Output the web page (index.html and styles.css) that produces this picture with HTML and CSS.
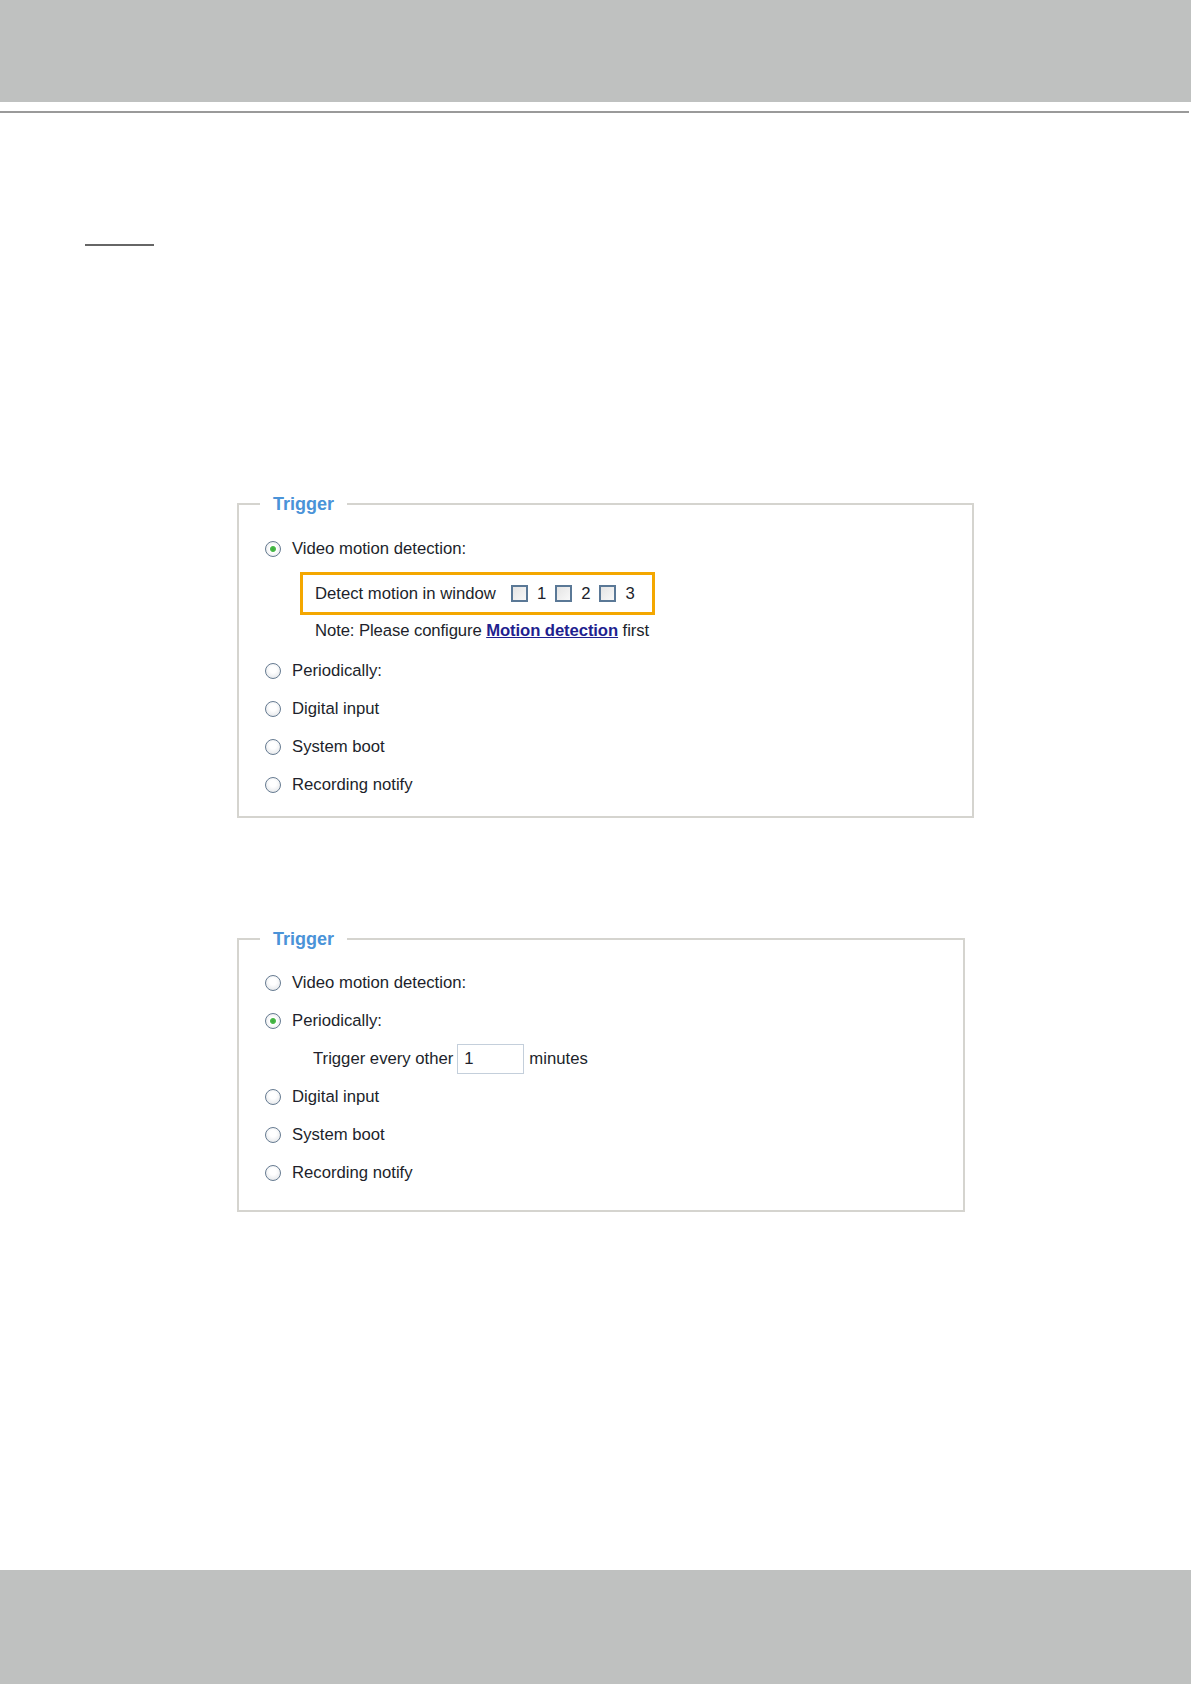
FILE: index.html
```html
<!DOCTYPE html>
<html lang="en">
<head>
    <meta charset="UTF-8">
    <meta name="viewport" content="width=device-width, initial-scale=1.0">
    <title>Event Settings - Trigger</title>
    <link rel="stylesheet" href="styles.css">
</head>
<body>
    <div class="page">
        <header class="top-band"></header>
        <div class="top-rule"></div>

        <main class="content">
            <div class="short-rule"></div>

            <!-- Trigger: video motion detection selected -->
            <fieldset class="trigger trigger-motion">
                <legend>Trigger</legend>
                <div class="row">
                    <input type="radio" name="trig1" class="radio" checked>
                    <span>Video motion detection:</span>
                </div>
                <div class="detect-box">
                    <span class="detect-label">Detect motion in window</span>
                    <input type="checkbox" class="check"><span class="num">1</span>
                    <input type="checkbox" class="check"><span class="num">2</span>
                    <input type="checkbox" class="check"><span class="num">3</span>
                </div>
                <div class="note">Note: Please configure <a href="#">Motion detection</a> first</div>
                <div class="row row-after-note">
                    <input type="radio" name="trig1" class="radio">
                    <span>Periodically:</span>
                </div>
                <div class="row">
                    <input type="radio" name="trig1" class="radio">
                    <span>Digital input</span>
                </div>
                <div class="row">
                    <input type="radio" name="trig1" class="radio">
                    <span>System boot</span>
                </div>
                <div class="row">
                    <input type="radio" name="trig1" class="radio">
                    <span>Recording notify</span>
                </div>
            </fieldset>

            <!-- Trigger: periodically selected -->
            <fieldset class="trigger trigger-period">
                <legend>Trigger</legend>
                <div class="row">
                    <input type="radio" name="trig2" class="radio">
                    <span>Video motion detection:</span>
                </div>
                <div class="row">
                    <input type="radio" name="trig2" class="radio" checked>
                    <span>Periodically:</span>
                </div>
                <div class="row sub-row">
                    <span>Trigger every other</span>
                    <input type="text" class="minutes" value="1">
                    <span>minutes</span>
                </div>
                <div class="row">
                    <input type="radio" name="trig2" class="radio">
                    <span>Digital input</span>
                </div>
                <div class="row">
                    <input type="radio" name="trig2" class="radio">
                    <span>System boot</span>
                </div>
                <div class="row">
                    <input type="radio" name="trig2" class="radio">
                    <span>Recording notify</span>
                </div>
            </fieldset>
        </main>

        <footer class="bottom-band"></footer>
    </div>
</body>
</html>
```

FILE: styles.css
```css
:root {
    --band-color: #bfc1c0;
    --text-color: #211f2b;
    --legend-color: #4a93d8;
    --frame-color: #d5d4cf;
    --highlight: #f4a700;
}

body {
    margin: 0;
    font-family: "Liberation Sans", Arial, sans-serif;
    color: var(--text-color);
    background-color: #ffffff;
}

.page {
    min-height: 1684px;
    display: flex;
    flex-direction: column;
}

.top-band {
    height: 102px;
    background-color: var(--band-color);
}

.top-rule {
    width: 1189px;
    height: 2px;
    margin-top: 9px;
    background-color: #9a9a9a;
}

.content {
    flex: 1;
    padding-left: 237px;
}

.short-rule {
    width: 69px;
    height: 2px;
    margin: 131px 0 0 -152px;
    background-color: #666666;
}

.trigger {
    margin: 0;
    padding: 0 0 12px 26px;
    border: 2px solid var(--frame-color);
    font-size: 16.7px;
}

.trigger-motion {
    width: 707px;
    margin-top: 248px;
    padding-top: 16px;
}

.trigger-period {
    width: 698px;
    margin-top: 111px;
    padding-top: 15px;
    padding-bottom: 18px;
}

legend {
    margin-left: -5px;
    padding: 0 13px;
    font-size: 18px;
    font-weight: bold;
    line-height: 20px;
    color: var(--legend-color);
}

.row {
    height: 38px;
    display: flex;
    align-items: center;
}

.radio {
    appearance: none;
    width: 16px;
    height: 16px;
    margin: 0 11px 0 0;
    border: 1px solid #667b91;
    border-radius: 50%;
    background: radial-gradient(circle at 50% 40%, #ffffff 30%, #dcdfe3 100%);
    box-sizing: border-box;
}

.radio:checked {
    background: radial-gradient(circle, #3aa93a 0, #4cbb4c 2.5px, #ffffff 3.5px, #e1e3e6 100%);
}

.detect-box {
    width: 337px;
    height: 37px;
    margin: 4px 0 0 35px;
    padding-left: 12px;
    border: 3px solid var(--highlight);
    display: flex;
    align-items: center;
}

.detect-label {
    margin-right: 15px;
}

.check {
    appearance: none;
    width: 17px;
    height: 17px;
    margin: 0 9px 0 0;
    border: 2px solid #5a7896;
    background: linear-gradient(135deg, #e4e4e4, #f8f8f8);
    box-sizing: border-box;
}

.num {
    margin-right: 9px;
}

.note {
    padding-left: 50px;
    line-height: 32px;
    letter-spacing: -0.1px;
}

.note a {
    color: #1f1f8f;
    font-weight: bold;
}

.row-after-note {
    margin-top: 5px;
}

.sub-row {
    padding-left: 48px;
}

.minutes {
    width: 67px;
    height: 30px;
    margin: 0 5px 0 4px;
    padding: 0 6px;
    border: 1px solid #c4cfdb;
    box-sizing: border-box;
    font-family: inherit;
    font-size: 16.7px;
    color: var(--text-color);
}

.bottom-band {
    height: 114px;
    background-color: var(--band-color);
}
```
